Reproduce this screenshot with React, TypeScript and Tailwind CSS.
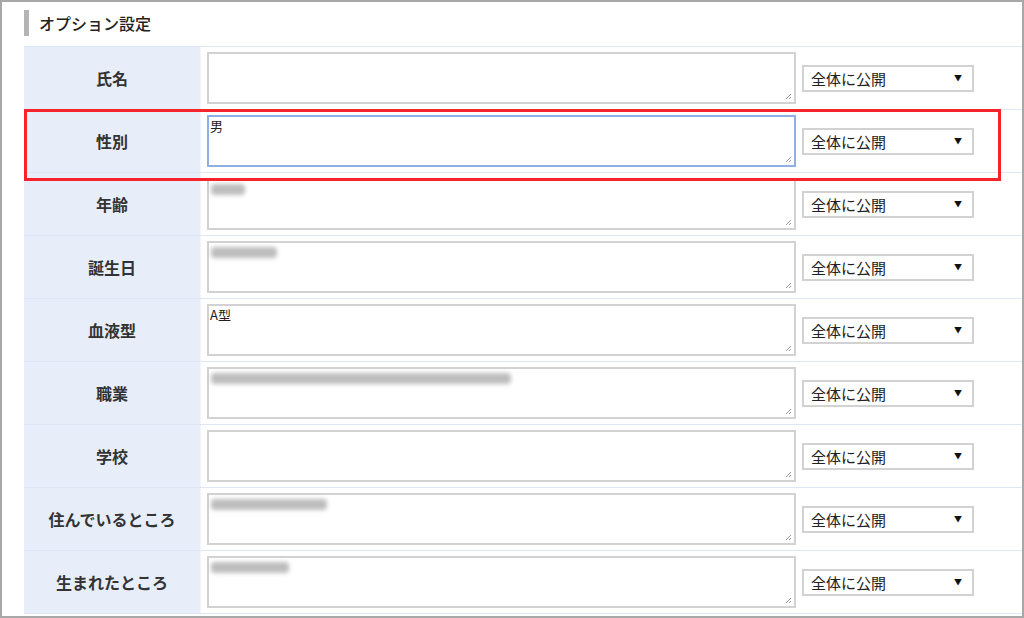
import React from "react";

type Row = { label: string; text?: string; blur?: number[]; focused?: boolean };

const rows: Row[] = [
  { label: "氏名" },
  { label: "性別", text: "男", focused: true },
  { label: "年齢", blur: [34] },
  { label: "誕生日", blur: [66] },
  { label: "血液型", text: "A型" },
  { label: "職業", blur: [300] },
  { label: "学校" },
  { label: "住んでいるところ", blur: [116] },
  { label: "生まれたところ", blur: [78] },
];

function Resize() {
  return (
    <svg width="8" height="8" viewBox="0 0 8 8" className="absolute right-[2px] bottom-[2px]">
      <path d="M7 2 L2 7 M7 5 L5 7" stroke="#999" strokeWidth="1" />
    </svg>
  );
}

export default function App() {
  return (
    <div
      className="relative w-[1024px] h-[618px] bg-white border-2 border-[#a8a8a8] overflow-hidden text-[#333]"
      style={{ fontFamily: '"Noto Sans CJK JP", "Noto Sans", sans-serif' }}
    >
      <div className="flex items-start h-[44px] pl-[22px] pt-[8px]">
        <div className="w-[5px] h-[26px] bg-[#b4b4b4]" />
        <div className="ml-[10px] mt-[4px] text-[16px] font-medium leading-[18px] text-[#222]">オプション設定</div>
      </div>
      <div className="ml-[22px] border-t border-[#dfe6f4]">
        {rows.map((r, i) => (
          <div key={i} className="flex h-[63px] border-b border-[#dfe6f4] box-border">
            <div className="w-[176px] bg-[#e7eef9] flex items-center justify-center text-[16px] font-bold text-[#333]">
              {r.label}
            </div>
            <div className="w-[1px] bg-[#f2f5fb]" />
            <div className="flex-1 flex items-center pl-[6px]">
              <div
                className={`relative w-[589px] h-[52px] bg-white border-2 ${
                  r.focused ? "border-[#8fb0e6]" : "border-[#d2d2d2]"
                }`}
              >
                {r.text && (
                  <div className="absolute left-[1px] top-[1px] text-[13px] leading-[16px] text-[#222]">{r.text}</div>
                )}
                {r.blur &&
                  r.blur.map((w, j) => (
                    <div
                      key={j}
                      className="absolute left-[2px] top-[4px] h-[11px] bg-[#bdbdbd] blur-[2px] rounded-sm"
                      style={{ width: w }}
                    />
                  ))}
                <Resize />
              </div>
              <div className="ml-[6px] w-[172px] h-[27px] border-2 border-[#d2d2d2] bg-white flex items-center pl-[7px] pr-[10px] justify-between">
                <span className="text-[15px] text-[#222] leading-none">全体に公開</span>
                <span className="text-[8px] text-[#111] leading-none">▼</span>
              </div>
            </div>
          </div>
        ))}
      </div>
      <div className="absolute left-[22px] top-[107px] w-[977px] h-[72px] border-[3px] border-[#f5242b]" />
    </div>
  );
}
